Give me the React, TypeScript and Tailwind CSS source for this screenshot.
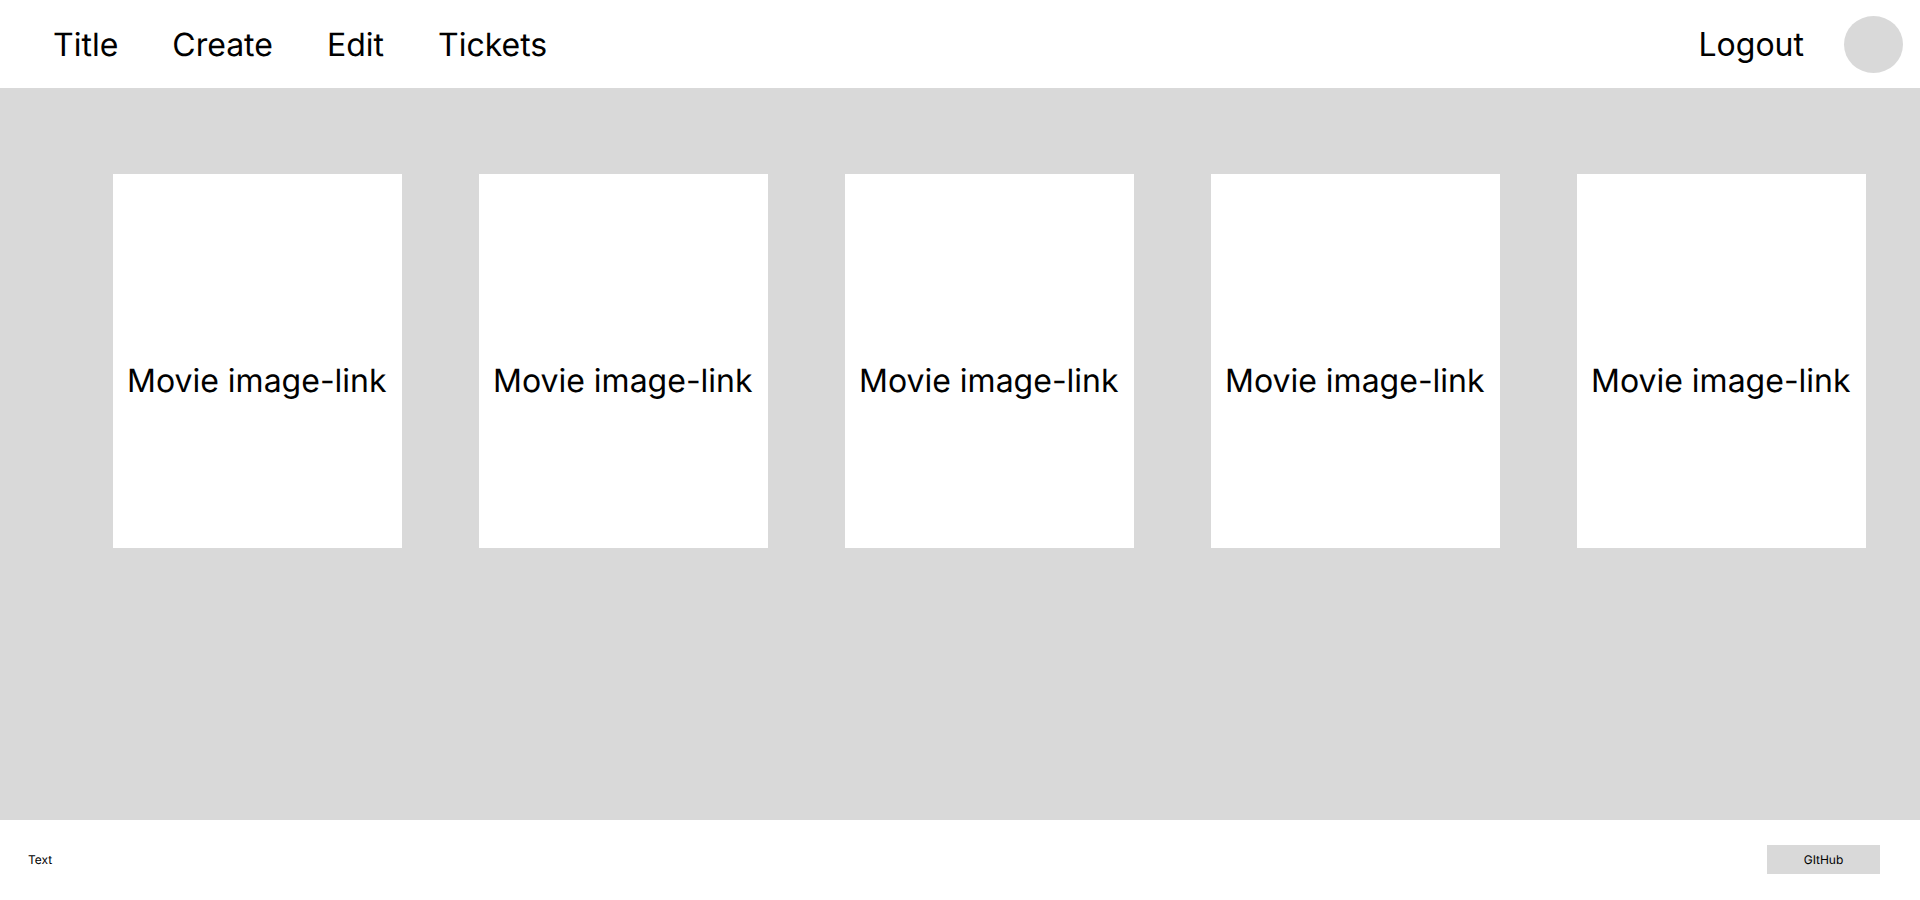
const movies = [1, 2, 3, 4, 5];

export default function App() {
  return (
    <div className="flex min-h-screen flex-col bg-[#d9d9d9] font-['Inter',sans-serif] text-black [text-rendering:geometricPrecision]">
      <header className="flex h-22 items-center justify-between bg-white pr-[17px] pl-[53px] text-[32px] leading-10">
        <nav className="flex items-center gap-[54px] pt-0.5">
          <a href="#title">Title</a>
          <a href="#create">Create</a>
          <a href="#edit">Edit</a>
          <a href="#tickets">Tickets</a>
        </nav>
        <div className="flex items-center gap-10">
          <button type="button" className="pt-0.5">Logout</button>
          <a href="#profile" aria-label="Profile" className="h-[57px] w-[59px] rounded-[50%] bg-[#d9d9d9]" />
        </div>
      </header>
      <main className="grow pt-[86px] pr-[54px] pl-[113px]">
        <ul className="grid grid-cols-5 gap-[77px]">
          {movies.map((id) => (
            <li key={id}>
              <a
                href={`#movie-${id}`}
                className="flex h-[374px] items-center bg-white pt-10 pl-[14px] text-[32px] leading-10 whitespace-nowrap"
              >
                Movie image-link
              </a>
            </li>
          ))}
        </ul>
      </main>
      <footer className="flex h-20 items-center justify-between bg-white pr-10 pb-px pl-7 text-xs">
        <p>Text</p>
        <a href="#github" className="flex h-[29px] w-[113px] items-center justify-center bg-[#d9d9d9]">
          GItHub
        </a>
      </footer>
    </div>
  );
}
